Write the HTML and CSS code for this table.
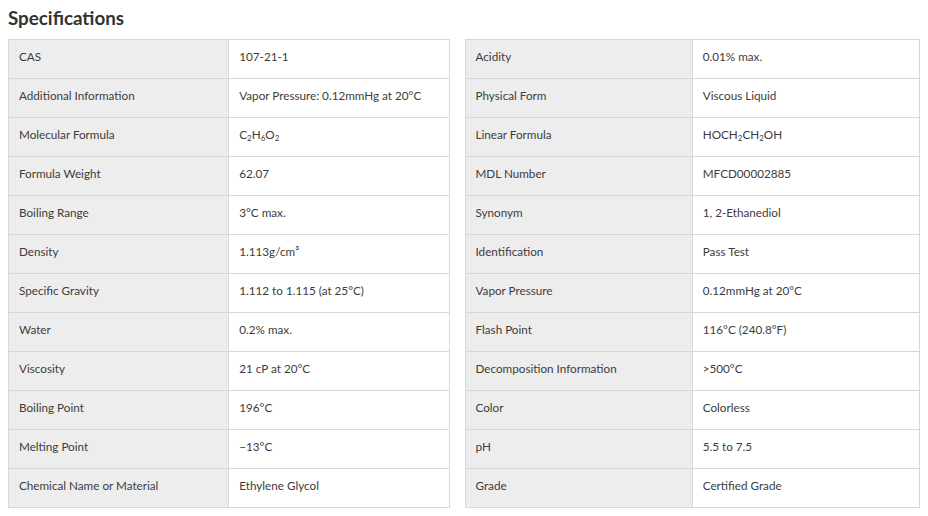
FILE: index.html
```html
<!DOCTYPE html>
<html>
<head>
<meta charset="utf-8">
<link rel="stylesheet" href="styles.css">
</head>
<body>
<h2 class="title">Specifications</h2>
<div class="tables">
<table class="spec spec-left">
<tr><th>CAS</th><td>107-21-1</td></tr>
<tr><th>Additional Information</th><td>Vapor Pressure: 0.12mmHg at 20°C</td></tr>
<tr><th>Molecular Formula</th><td>C<sub>2</sub>H<sub>6</sub>O<sub>2</sub></td></tr>
<tr><th>Formula Weight</th><td>62.07</td></tr>
<tr><th>Boiling Range</th><td>3°C max.</td></tr>
<tr><th>Density</th><td>1.113g/cm³</td></tr>
<tr><th>Specific Gravity</th><td>1.112 to 1.115 (at 25°C)</td></tr>
<tr><th>Water</th><td>0.2% max.</td></tr>
<tr><th>Viscosity</th><td>21 cP at 20°C</td></tr>
<tr><th>Boiling Point</th><td>196°C</td></tr>
<tr><th>Melting Point</th><td>−13°C</td></tr>
<tr><th>Chemical Name or Material</th><td>Ethylene Glycol</td></tr>
</table>
<table class="spec spec-right">
<tr><th>Acidity</th><td>0.01% max.</td></tr>
<tr><th>Physical Form</th><td>Viscous Liquid</td></tr>
<tr><th>Linear Formula</th><td>HOCH<sub>2</sub>CH<sub>2</sub>OH</td></tr>
<tr><th>MDL Number</th><td>MFCD00002885</td></tr>
<tr><th>Synonym</th><td>1, 2-Ethanediol</td></tr>
<tr><th>Identification</th><td>Pass Test</td></tr>
<tr><th>Vapor Pressure</th><td>0.12mmHg at 20°C</td></tr>
<tr><th>Flash Point</th><td>116°C (240.8°F)</td></tr>
<tr><th>Decomposition Information</th><td>&gt;500°C</td></tr>
<tr><th>Color</th><td>Colorless</td></tr>
<tr><th>pH</th><td>5.5 to 7.5</td></tr>
<tr><th>Grade</th><td>Certified Grade</td></tr>
</table>
</div>
</body>
</html>
```
FILE: styles.css
```css
html, body {
  margin: 0;
  padding: 0;
  background: #fff;
}
body {
  padding: 0 8px;
  font-family: Lato, "Open Sans", sans-serif;
  color: #333;
}
.title {
  margin: 0;
  padding-top: 6px;
  height: 39px;
  box-sizing: border-box;
  font-family: Lato, sans-serif;
  font-weight: 700;
  font-size: 18.8px;
  line-height: 24px;
  color: #333;
}
.tables {
  display: flex;
  gap: 15px;
  align-items: flex-start;
}
.spec {
  border-collapse: collapse;
  table-layout: fixed;
  font-size: 11.7px;
  color: #3c3c3c;
}
.spec-left { width: 443px; }
.spec-right { width: 457px; }
.spec th, .spec td {
  border: 1px solid #d3dada;
  height: 32px;
  padding: 0 10px 6px 10px;
  text-align: left;
  font-weight: 400;
  vertical-align: middle;
  width: 50%;
}
.spec th {
  background: #eeeded;
}
.spec td {
  background: #fff;
}
.spec sub {
  font-size: 8px;
  vertical-align: -2px;
  line-height: 0;
}
```
